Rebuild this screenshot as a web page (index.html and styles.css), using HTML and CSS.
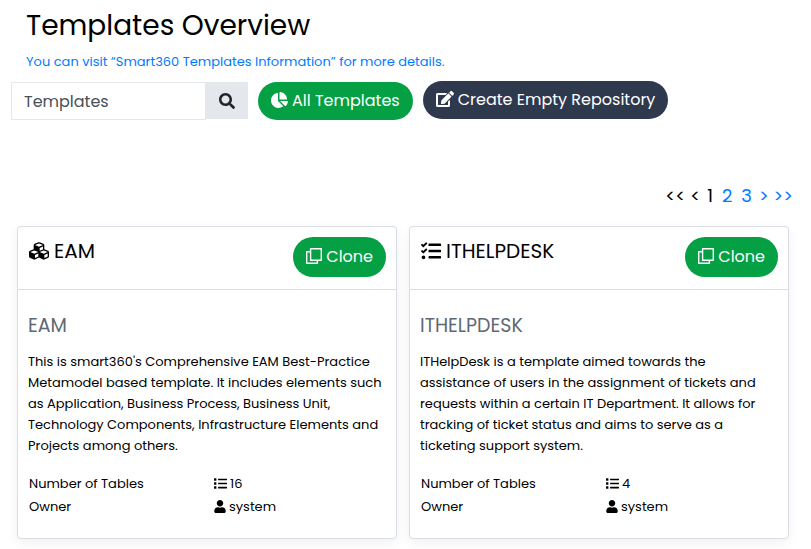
FILE: index.html
```html
<!DOCTYPE html>
<html lang="en">
<head>
  <meta charset="UTF-8">
  <meta name="viewport" content="width=device-width, initial-scale=1">
  <title>Templates Overview</title>
  <link rel="stylesheet" href="styles.css">
</head>
<body>
  <!-- icon set -->
  <svg class="icon-defs" aria-hidden="true">
    <symbol id="icon-search" viewBox="0 0 512 512">
      <path d="M505 442.7L405.3 343c-4.5-4.5-10.6-7-17-7H372c27.6-35.3 44-79.7 44-128C416 93.1 322.9 0 208 0S0 93.1 0 208s93.1 208 208 208c48.3 0 92.7-16.4 128-44v16.3c0 6.4 2.5 12.5 7 17l99.7 99.7c9.4 9.4 24.6 9.4 33.9 0l28.3-28.3c9.4-9.4 9.4-24.6.1-34zM208 336c-70.7 0-128-57.2-128-128 0-70.7 57.2-128 128-128 70.7 0 128 57.2 128 128 0 70.7-57.2 128-128 128z"/>
    </symbol>
    <symbol id="icon-pie" viewBox="0 0 544 512">
      <path d="M527.79 288H290.5l158.03 158.03c6.04 6.04 15.98 6.53 22.19.68 38.7-36.46 65.32-85.61 73.13-140.86 1.34-9.46-6.51-17.85-16.06-17.85zm-15.83-64.8C503.72 103.74 408.26 8.28 288.8.04 279.68-.59 272 7.1 272 16.24V240h223.77c9.14 0 16.82-7.68 16.19-16.8zM224 288V50.71c0-9.55-8.39-17.4-17.84-16.06C86.99 51.49-4.1 155.6.14 280.37 4.5 408.51 114.83 513.59 243.03 511.98c50.4-.63 96.97-16.87 135.26-44.03 7.9-5.6 8.42-17.23 1.57-24.08L224 288z"/>
    </symbol>
    <symbol id="icon-edit" viewBox="0 0 576 512">
      <path d="M402.6 83.2l90.2 90.2c3.8 3.8 3.8 10 0 13.8L274.4 405.6l-92.8 10.3c-12.4 1.4-22.9-9.1-21.5-21.5l10.3-92.8L388.8 83.2c3.8-3.8 10-3.8 13.8 0zm162-22.9l-48.8-48.8c-15.2-15.2-39.9-15.2-55.2 0l-35.4 35.4c-3.8 3.8-3.8 10 0 13.8l90.2 90.2c3.8 3.8 10 3.8 13.8 0l35.4-35.4c15.2-15.3 15.2-40 0-55.2zM384 346.2V448H64V128h229.8c3.2 0 6.2-1.3 8.5-3.5l40-40c7.6-7.6 2.2-20.5-8.5-20.5H48C21.5 64 0 85.5 0 112v352c0 26.5 21.5 48 48 48h352c26.5 0 48-21.5 48-48V306.2c0-10.7-12.9-16-20.5-8.5l-40 40c-2.2 2.3-3.5 5.3-3.5 8.5z"/>
    </symbol>
    <symbol id="icon-user" viewBox="0 0 448 512">
      <path d="M224 256c70.7 0 128-57.3 128-128S294.7 0 224 0 96 57.3 96 128s57.3 128 128 128zm89.6 32h-16.7c-22.2 10.2-46.9 16-72.9 16s-50.6-5.8-72.9-16h-16.7C60.2 288 0 348.2 0 422.4V464c0 26.5 21.5 48 48 48h352c26.5 0 48-21.5 48-48v-41.6c0-74.2-60.2-134.4-134.4-134.4z"/>
    </symbol>
    <symbol id="icon-list" viewBox="0 0 512 512">
      <path d="M16 48h64a16 16 0 0 1 16 16v64a16 16 0 0 1-16 16H16a16 16 0 0 1-16-16V64a16 16 0 0 1 16-16zM16 208h64a16 16 0 0 1 16 16v64a16 16 0 0 1-16 16H16a16 16 0 0 1-16-16v-64a16 16 0 0 1 16-16zM16 368h64a16 16 0 0 1 16 16v64a16 16 0 0 1-16 16H16a16 16 0 0 1-16-16v-64a16 16 0 0 1 16-16zM176 64h320a16 16 0 0 1 16 16v32a16 16 0 0 1-16 16H176a16 16 0 0 1-16-16V80a16 16 0 0 1 16-16zM176 224h320a16 16 0 0 1 16 16v32a16 16 0 0 1-16 16H176a16 16 0 0 1-16-16v-32a16 16 0 0 1 16-16zM176 384h320a16 16 0 0 1 16 16v32a16 16 0 0 1-16 16H176a16 16 0 0 1-16-16v-32a16 16 0 0 1 16-16z"/>
    </symbol>
    <symbol id="icon-tasks" viewBox="0 0 512 512">
      <path d="M139.61 35.5a12 12 0 0 0-17 0L58.93 98.81l-22.7-22.12a12 12 0 0 0-17 0L3.53 92.41a12 12 0 0 0 0 17l47.59 47.4a12.78 12.78 0 0 0 17.61 0l15.59-15.62L156.52 69.09a12.09 12.09 0 0 0 .09-17zm0 159.19a12 12 0 0 0-17 0l-63.68 63.72-22.7-22.1a12 12 0 0 0-17 0L3.53 252a12 12 0 0 0 0 17L51 316.5a12.77 12.77 0 0 0 17.6 0l15.7-15.69 72.2-72.22a12 12 0 0 0 .09-16.9zM64 368c-26.49 0-48.59 21.5-48.59 48S37.53 464 64 464a48 48 0 0 0 0-96zm432 16H208a16 16 0 0 0-16 16v32a16 16 0 0 0 16 16h288a16 16 0 0 0 16-16v-32a16 16 0 0 0-16-16zm0-320H208a16 16 0 0 0-16 16v32a16 16 0 0 0 16 16h288a16 16 0 0 0 16-16V80a16 16 0 0 0-16-16zm0 160H208a16 16 0 0 0-16 16v32a16 16 0 0 0 16 16h288a16 16 0 0 0 16-16v-32a16 16 0 0 0-16-16z"/>
    </symbol>
    <symbol id="icon-cubes" viewBox="0 0 512 512">
      <path d="M488.6 250.2L392 214V105.5c0-15-9.3-28.4-23.4-33.7l-100-37.5c-8.1-3.1-17.1-3.1-25.3 0l-100 37.5c-14.1 5.3-23.4 18.7-23.4 33.7V214l-96.6 36.2C9.3 255.5 0 268.9 0 283.9V394c0 13.6 7.7 26.1 19.9 32.2l100 50c10.1 5.1 22.1 5.1 32.2 0l103.9-52 103.9 52c10.1 5.1 22.1 5.1 32.2 0l100-50c12.2-6.1 19.9-18.6 19.9-32.2V283.9c0-15-9.3-28.4-23.4-33.7zM358 214.8l-85 31.9v-68.2l85-37v73.3zM154 104.1l102-38.2 102 38.2v.6l-102 41.4-102-41.4v-.6zm84 291.1l-85 42.5v-79.1l85-38.8v75.4zm0-112l-102 41.4-102-41.4v-.6l102-38.2 102 38.2v.6zm240 112l-85 42.5v-79.1l85-38.8v75.4zm0-112l-102 41.4-102-41.4v-.6l102-38.2 102 38.2v.6z"/>
    </symbol>
    <symbol id="icon-clone" viewBox="0 0 16 16">
      <path d="M4.6.7h10.7v11.6H4.6zM4.600 3.700H.7v11.6h10.700v-3" fill="none" stroke="currentColor" stroke-width="1.4" stroke-linejoin="round"/>
    </symbol>
  </svg>

  <main class="page">
    <header class="page-header">
      <h1>Templates Overview</h1>
      <a href="#" class="info-link">You can visit “Smart360 Templates Information” for more details.</a>
    </header>

    <div class="toolbar">
      <form class="search">
        <input type="text" class="search-input" placeholder="Templates" aria-label="Search templates">
        <button type="button" class="search-btn" aria-label="Search"><svg class="icon"><use href="#icon-search"/></svg></button>
      </form>
      <button type="button" class="btn btn-green"><svg class="icon icon-pie"><use href="#icon-pie"/></svg>All Templates</button>
      <button type="button" class="btn btn-dark"><svg class="icon icon-edit"><use href="#icon-edit"/></svg>Create Empty Repository</button>
    </div>

    <nav class="pagination" aria-label="Pages">
      <span>&lt;&lt;</span>
      <span>&lt;</span>
      <span class="page-number">1</span>
      <a href="#" class="page-number">2</a>
      <a href="#" class="page-number">3</a>
      <a href="#">&gt;</a>
      <a href="#">&gt;&gt;</a>
    </nav>

    <div class="cards">
      <article class="card">
        <div class="card-header">
          <h2><svg class="icon icon-title"><use href="#icon-cubes"/></svg>EAM</h2>
          <button type="button" class="btn btn-green btn-clone"><svg class="icon"><use href="#icon-clone"/></svg>Clone</button>
        </div>
        <div class="card-body">
          <h3>EAM</h3>
          <p>This is smart360's Comprehensive EAM Best-Practice Metamodel based template. It includes elements such as Application, Business Process, Business Unit, Technology Components, Infrastructure Elements and Projects among others.</p>
          <table class="details">
            <tr>
              <th scope="row">Number of Tables</th>
              <td><svg class="icon"><use href="#icon-list"/></svg>16</td>
            </tr>
            <tr>
              <th scope="row">Owner</th>
              <td><svg class="icon icon-user"><use href="#icon-user"/></svg>system</td>
            </tr>
          </table>
        </div>
      </article>

      <article class="card">
        <div class="card-header">
          <h2><svg class="icon icon-title"><use href="#icon-tasks"/></svg>ITHELPDESK</h2>
          <button type="button" class="btn btn-green btn-clone"><svg class="icon"><use href="#icon-clone"/></svg>Clone</button>
        </div>
        <div class="card-body">
          <h3>ITHELPDESK</h3>
          <p>ITHelpDesk is a template aimed towards the assistance of users in the assignment of tickets and requests within a certain IT Department. It allows for tracking of ticket status and aims to serve as a ticketing support system.</p>
          <table class="details">
            <tr>
              <th scope="row">Number of Tables</th>
              <td><svg class="icon"><use href="#icon-list"/></svg>4</td>
            </tr>
            <tr>
              <th scope="row">Owner</th>
              <td><svg class="icon icon-user"><use href="#icon-user"/></svg>system</td>
            </tr>
          </table>
        </div>
      </article>
    </div>
  </main>
</body>
</html>
```
FILE: styles.css
```css
* {
  margin: 0;
  padding: 0;
  box-sizing: border-box;
}

body {
  background: #fff;
  color: #000;
  font-family: 'Poppins', 'Inter', sans-serif;
  font-size: 13px;
}

a {
  color: #007bff;
  text-decoration: none;
}

button,
input {
  font-family: inherit;
  font-size: 16px;
}

button {
  border: none;
  cursor: pointer;
}

.icon-defs {
  display: block;
  width: 0;
  height: 0;
}

.icon {
  width: 16px;
  height: 16px;
  fill: currentColor;
  flex-shrink: 0;
}

.page {
  padding: 8px 22px 10px 17px;
}

.page-header {
  padding-left: 9px;
}

.page-header h1 {
  font-size: 28px;
  font-weight: 400;
  line-height: 36px;
}

.info-link {
  display: block;
  margin-top: 8px;
  font-size: 13px;
  line-height: 20px;
}

.toolbar {
  display: flex;
  gap: 10px;
  margin: 9px 0 0 -6px;
}

.search {
  display: flex;
  width: 237px;
  margin-top: 1px;
}

.search-input {
  flex: 1;
  min-width: 0;
  height: 38px;
  padding: 0 12px;
  border: 1px solid #e4e7eb;
  outline: none;
}

.search-input::placeholder {
  color: #495057;
  opacity: 1;
}

.search-btn {
  display: flex;
  align-items: center;
  justify-content: center;
  width: 42px;
  height: 37px;
  background: #e4e7eb;
  color: #212529;
}

.btn {
  display: flex;
  align-items: center;
  gap: 4px;
  height: 38px;
  padding: 0 13px 2px;
  border-radius: 20px;
  color: #fff;
  white-space: nowrap;
}

.btn-green {
  background: #04a043;
}

.toolbar .btn-green {
  margin-top: 1px;
}

.btn-dark {
  background: #2f394e;
}

.icon-pie {
  width: 17px;
}

.icon-edit {
  width: 18px;
}

.btn-clone {
  height: 40px;
}

.pagination {
  display: flex;
  justify-content: flex-end;
  gap: 5px;
  margin: 62px -4px 0 0;
  font-size: 18px;
  line-height: 28px;
}

.page-number {
  padding: 0 2px;
}

.cards {
  display: grid;
  grid-template-columns: 1fr 1fr;
  gap: 12px;
  margin-top: 16px;
}

.card {
  border: 1px solid #d8dee4;
  border-radius: 4px;
  background: #fff;
  box-shadow: 0 4px 12px rgba(0, 0, 0, 0.06);
}

.card-header {
  display: flex;
  justify-content: space-between;
  align-items: flex-start;
  height: 63px;
  padding: 10px 10px 0 11px;
  border-bottom: 1px solid #d8dee4;
}

.card-header h2 {
  display: flex;
  align-items: center;
  gap: 5px;
  font-size: 20px;
  font-weight: 400;
  line-height: 28px;
}

.icon-title {
  width: 20px;
  height: 20px;
}

.card-body {
  padding: 23px 10px 20px;
}

.card-body h3 {
  color: #5f6873;
  font-size: 19px;
  font-weight: 400;
  line-height: 26px;
}

.card-body p {
  margin-top: 12px;
  line-height: 21px;
}

.details {
  width: 100%;
  margin-top: 16px;
  border-collapse: collapse;
  table-layout: fixed;
}

.details th,
.details td {
  padding-left: 1px;
  height: 23px;
  font-weight: 400;
  line-height: 20px;
  text-align: left;
}

.details th {
  width: 185px;
}

.details .icon {
  width: 13px;
  height: 13px;
  margin-right: 3px;
  vertical-align: -2px;
}

.details .icon-user {
  width: 12px;
}
```
